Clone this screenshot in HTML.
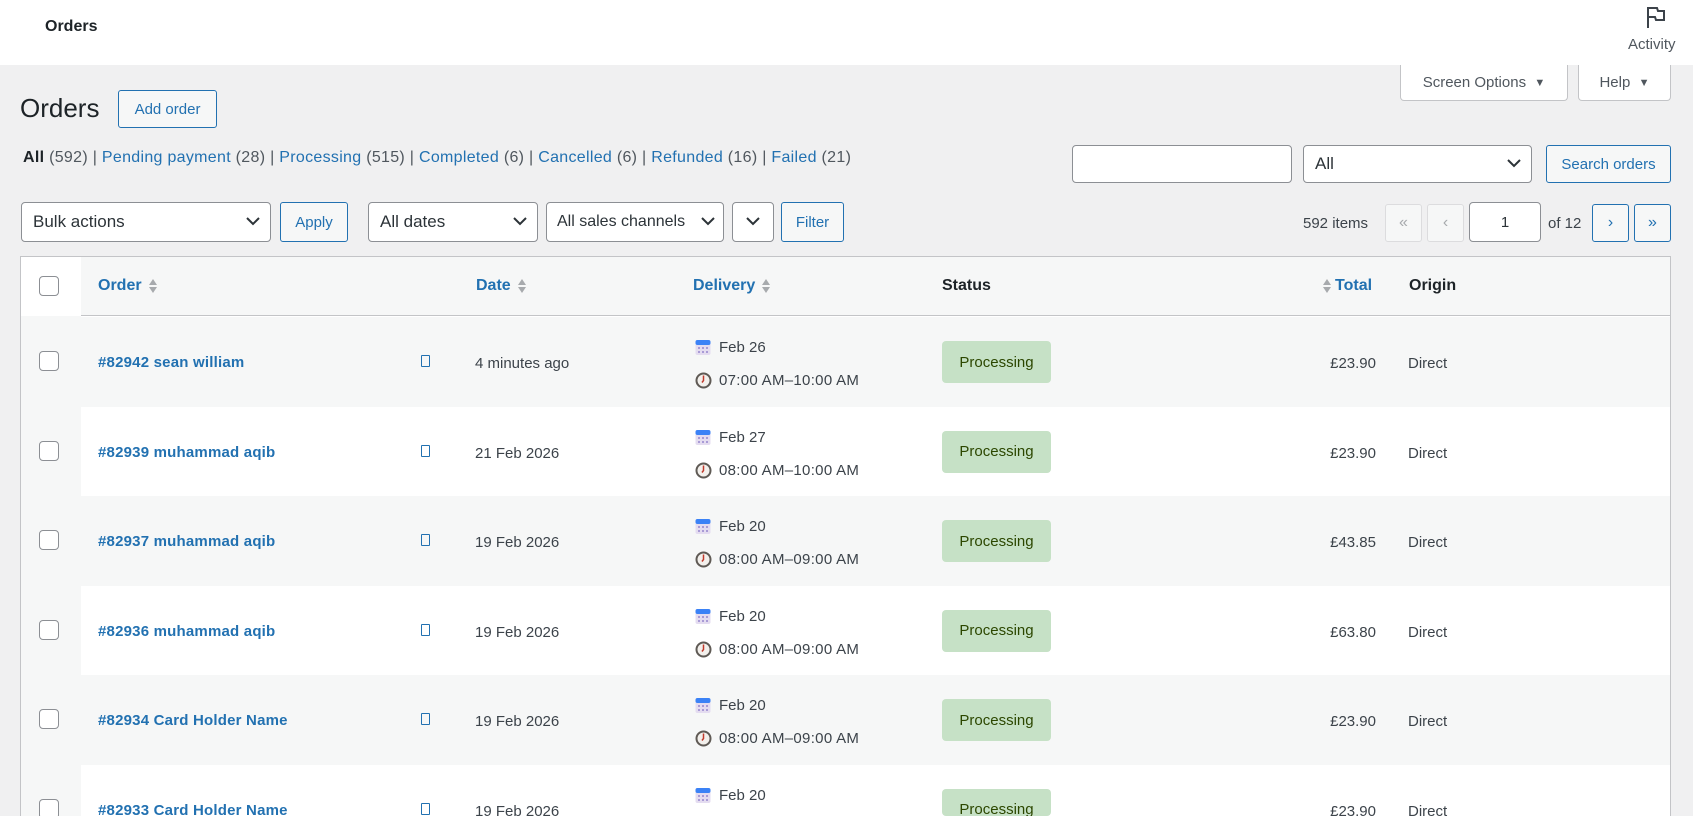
<!DOCTYPE html>
<html style="overflow:hidden"><head><meta charset="utf-8"><style>
*{box-sizing:border-box;margin:0;padding:0}
html,body{width:1693px;height:816px;overflow:hidden}
body{background:#f0f0f1;font-family:"Liberation Sans",sans-serif;font-size:14px;color:#3c434a}
#w{position:relative;width:1693px;height:816px;overflow:hidden}
.a{position:absolute}
.hdr{left:0;top:0;width:1693px;height:65px;background:#fff}
.btn{position:absolute;border:1px solid #2271b1;color:#2271b1;background:#f6f7f7;border-radius:3px;display:flex;align-items:center;justify-content:center;font-size:15px}
.sel{position:absolute;border:1px solid #8c8f94;background:#fff;border-radius:4px;color:#2c3338;font-size:17px;display:flex;align-items:center;padding-left:11px}
.sel svg{position:absolute;right:10px;top:50%;margin-top:-5px}
.blue{color:#2271b1}
.pg{position:absolute;top:204px;height:38px;width:37px;border:1px solid #2271b1;border-radius:3px;background:#f6f7f7;color:#2271b1;display:flex;align-items:center;justify-content:center;font-size:16px}
.pg.dis{border-color:#dcdcde;color:#a7aaad}
.cb{position:absolute;left:19px;width:20px;height:20px;border:1px solid #8c8f94;border-radius:4px;background:#fff}
.sort{display:inline-block;vertical-align:middle;margin-left:6px}
</style></head><body><div id="w">
<div class="a hdr"></div>
<div class="a" style="left:45px;top:18px;font-size:16px;font-weight:bold;color:#1d2327">Orders</div>
<svg class="a" style="left:1645px;top:5px" width="22" height="24" viewBox="0 0 22 24"><path d="M3 23V3h9l1 3h6v9h-8l-1-3H4" fill="none" stroke="#3c434a" stroke-width="2"/></svg>
<div class="a" style="left:1628px;top:36px;font-size:15px;color:#50575e">Activity</div>
<div class="a" style="left:1400px;top:65px;width:168px;height:36px;background:#fff;border:1px solid #c3c4c7;border-top:0;border-radius:0 0 4px 4px;display:flex;align-items:center;justify-content:center;color:#50575e;font-size:15px">Screen Options&nbsp;&nbsp;<span style="font-size:11px">▼</span></div>
<div class="a" style="left:1578px;top:65px;width:93px;height:36px;background:#fff;border:1px solid #c3c4c7;border-top:0;border-radius:0 0 4px 4px;display:flex;align-items:center;justify-content:center;color:#50575e;font-size:15px">Help&nbsp;&nbsp;<span style="font-size:11px">▼</span></div>
<div class="a" style="left:20px;top:93px;font-size:26px;color:#1d2327">Orders</div>
<div class="btn" style="left:118px;top:90px;width:99px;height:38px">Add order</div>
<div class="a" style="left:23px;top:149px;font-size:16px;letter-spacing:0.3px;color:#50575e;white-space:nowrap"><b style="color:#1d2327;font-weight:600">All</b> (592) | <span class="blue">Pending payment</span> (28) | <span class="blue">Processing</span> (515) | <span class="blue">Completed</span> (6) | <span class="blue">Cancelled</span> (6) | <span class="blue">Refunded</span> (16) | <span class="blue">Failed</span> (21)</div>
<div class="a" style="left:1072px;top:145px;width:220px;height:38px;border:1px solid #8c8f94;border-radius:4px;background:#fff"></div>
<div class="sel" style="left:1303px;top:145px;width:229px;height:38px">All<svg width="14" height="9"><path d="M1 1l6 6 6-6" fill="none" stroke="#2c3338" stroke-width="2"/></svg></div>
<div class="btn" style="left:1546px;top:145px;width:125px;height:38px">Search orders</div>
<div class="sel" style="left:21px;top:202px;width:250px;height:40px">Bulk actions<svg width="14" height="9"><path d="M1 1l6 6 6-6" fill="none" stroke="#2c3338" stroke-width="2"/></svg></div>
<div class="btn" style="left:280px;top:202px;width:68px;height:40px">Apply</div>
<div class="sel" style="left:368px;top:202px;width:170px;height:40px">All dates<svg width="14" height="9"><path d="M1 1l6 6 6-6" fill="none" stroke="#2c3338" stroke-width="2"/></svg></div>
<div class="sel" style="left:546px;top:202px;width:178px;height:40px;padding-left:10px;font-size:16px">All sales channels<svg width="14" height="9" style="right:8px"><path d="M1 1l6 6 6-6" fill="none" stroke="#2c3338" stroke-width="2"/></svg></div>
<div class="sel" style="left:732px;top:202px;width:42px;height:40px"><svg width="14" height="9" style="right:13px"><path d="M1 1l6 6 6-6" fill="none" stroke="#2c3338" stroke-width="2"/></svg></div>
<div class="btn" style="left:781px;top:202px;width:63px;height:40px">Filter</div>
<div class="a" style="left:1303px;top:215px;color:#3c434a;font-size:15px">592 items</div>
<div class="pg dis" style="left:1385px">«</div>
<div class="pg dis" style="left:1427px">‹</div>
<div class="a" style="left:1469px;top:202px;width:72px;height:40px;border:1px solid #8c8f94;border-radius:4px;background:#fff;display:flex;align-items:center;justify-content:center;font-size:15px;color:#2c3338">1</div>
<div class="a" style="left:1548px;top:215px;font-size:15px">of 12</div>
<div class="pg" style="left:1592px">›</div>
<div class="pg" style="left:1634px">»</div>

<div class="a" style="left:20px;top:256px;width:1651px;height:600px;border:1px solid #c3c4c7;background:#fff"></div>
<div class="a" style="left:21px;top:257px;width:1649px;height:59px;background:#f6f7f7;border-bottom:1px solid #c3c4c7"></div>
<div class="a" style="left:21px;top:257px;width:60px;height:600px;background:#f6f7f7"></div>
<div class="a" style="left:21px;top:257px;width:60px;height:59px;background:#fff"></div>
<div class="cb" style="left:39px;top:276px"></div>
<div class="a blue" style="left:98px;top:277px;font-size:16px;font-weight:600">Order<svg class="sort" width="10" height="16"><path d="M1 7l4-6 4 6zM1 9l4 6 4-6z" fill="#a7aaad"/></svg></div>
<div class="a blue" style="left:476px;top:277px;font-size:16px;font-weight:600">Date<svg class="sort" width="10" height="16"><path d="M1 7l4-6 4 6zM1 9l4 6 4-6z" fill="#a7aaad"/></svg></div>
<div class="a blue" style="left:693px;top:277px;font-size:16px;font-weight:600">Delivery<svg class="sort" width="10" height="16"><path d="M1 7l4-6 4 6zM1 9l4 6 4-6z" fill="#a7aaad"/></svg></div>
<div class="a" style="left:942px;top:277px;font-size:16px;font-weight:600;color:#1d2327">Status</div>
<div class="a blue" style="left:1322px;top:277px;font-size:16px;font-weight:600"><svg width="10" height="16" style="vertical-align:middle;margin-right:3px"><path d="M1 7l4-6 4 6zM1 9l4 6 4-6z" fill="#a7aaad"/></svg>Total</div>
<div class="a" style="left:1409px;top:277px;font-size:16px;font-weight:600;color:#1d2327">Origin</div>

<div id="rows"></div>
</div>
<script>
var d=[["#82942 sean william","4 minutes ago","Feb 26","07:00 AM–10:00 AM","£23.90"],
["#82939 muhammad aqib","21 Feb 2026","Feb 27","08:00 AM–10:00 AM","£23.90"],
["#82937 muhammad aqib","19 Feb 2026","Feb 20","08:00 AM–09:00 AM","£43.85"],
["#82936 muhammad aqib","19 Feb 2026","Feb 20","08:00 AM–09:00 AM","£63.80"],
["#82934 Card Holder Name","19 Feb 2026","Feb 20","08:00 AM–09:00 AM","£23.90"],
["#82933 Card Holder Name","19 Feb 2026","Feb 20","","£23.90"]];
var h="";
d.forEach(function(r,i){var t=317+i*89.6;var bg=i%2==0?"#f6f7f7":"#fff";var hh=Math.min(90,816-t);
h+='<div class="a" style="left:81px;top:'+t+'px;width:1589px;height:'+hh+'px;background:'+bg+'"></div>';
h+='<div class="cb" style="left:39px;top:'+(t+34)+'px"></div>';
h+='<div class="a blue" style="left:98px;top:'+(t+37)+'px;font-size:15px;font-weight:600;letter-spacing:0.2px">'+r[0]+'</div>';
h+='<div class="a" style="left:421px;top:'+(t+38)+'px;width:9px;height:12px;border:1px solid #2271b1;border-radius:1px"></div>';
h+='<div class="a" style="left:475px;top:'+(t+38)+'px;font-size:15px">'+r[1]+'</div>';
h+='<svg class="a" style="left:695px;top:'+(t+22)+'px" width="16" height="17"><rect x="0.5" y="1" width="15" height="15" rx="2" fill="#e4dcf0"/><rect x="0.5" y="1" width="15" height="5" rx="2" fill="#3b82f6"/><g fill="#a99bd6"><rect x="3" y="8" width="2" height="2"/><rect x="7" y="8" width="2" height="2"/><rect x="11" y="8" width="2" height="2"/><rect x="3" y="12" width="2" height="2"/><rect x="7" y="12" width="2" height="2"/><rect x="11" y="12" width="2" height="2"/></g></svg>';
h+='<div class="a" style="left:719px;top:'+(t+22)+'px;font-size:15px">'+r[2]+'</div>';
if(r[3]){h+='<svg class="a" style="left:695px;top:'+(t+55)+'px" width="17" height="17"><circle cx="8.5" cy="8.5" r="7" fill="#f3f0ec" stroke="#5f5a55" stroke-width="2"/><path d="M8.5 3.5v5l-1.5 2" stroke="#c0392b" stroke-width="1.5" fill="none"/></svg>';
h+='<div class="a" style="left:719px;top:'+(t+55)+'px;font-size:15px;letter-spacing:0.3px">'+r[3]+'</div>';}
h+='<div class="a" style="left:942px;top:'+(t+24)+'px;width:109px;height:'+Math.min(42,816-t-24)+'px;overflow:hidden;background:#c6e1c6;border-radius:4px;color:#2c4700;font-size:15px;display:flex;align-items:'+(i==5?'flex-start;padding-top:12px':'center')+';justify-content:center">Processing</div>';
h+='<div class="a" style="left:1276px;top:'+(t+38)+'px;width:100px;text-align:right;font-size:15px">'+r[4]+'</div>';
h+='<div class="a" style="left:1408px;top:'+(t+38)+'px;font-size:15px">Direct</div>';
});
document.getElementById("rows").innerHTML=h;
</script>
</body></html>
